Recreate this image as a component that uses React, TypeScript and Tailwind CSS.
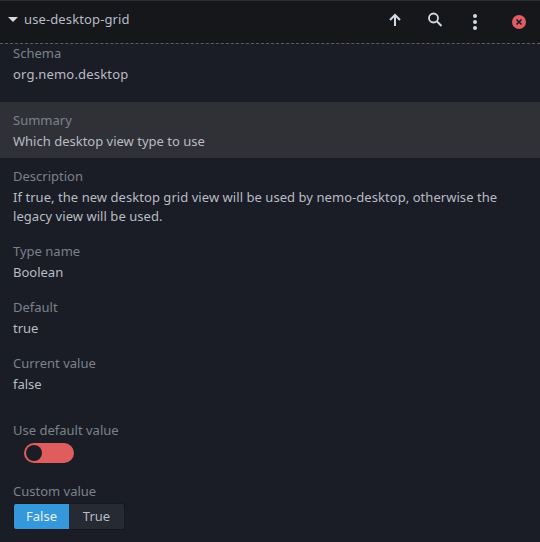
function Field({ label, value, className }: { label: string; value: string; className: string }) {
  return (
    <div className={`px-[13px] ${className}`}>
      <div className="text-[13px] leading-[20px] text-[#7c818c]">{label}</div>
      <div className="text-[13px] leading-[20px] mt-[1px] text-[#b9bcc4]">{value}</div>
    </div>
  )
}

export default function App() {
  return (
    <div className="w-[540px] h-[542px] overflow-hidden flex flex-col bg-[#1a1d25] font-['Noto_Sans',sans-serif]">
      {/* Title bar */}
      <div className="h-[43px] shrink-0 flex items-center bg-[#15171b] border-t border-[#2a2c30] pl-[8px] pb-[4px]">
        <svg width="10" height="6" viewBox="0 0 10 6" className="mr-[6px]">
          <path d="M0 0h10L5 5z" fill="#d3dae3" />
        </svg>
        <span className="text-[13px] tracking-[0.12px] text-[#b9bcc4]">use-desktop-grid</span>
        <div className="ml-auto flex items-center">
          <svg width="16" height="16" viewBox="0 0 16 16" className="mr-[24px]">
            <path d="M8 14V3M3 8l5-5 5 5" fill="none" stroke="#d3dae3" strokeWidth="2" />
          </svg>
          <svg width="16" height="16" viewBox="0 0 16 16" className="mr-[30px]">
            <circle cx="6.5" cy="6" r="4.5" fill="none" stroke="#d3dae3" strokeWidth="1.8" />
            <path d="M10 9.5l4.5 4.5" stroke="#d3dae3" strokeWidth="2" />
          </svg>
          <div className="flex flex-col gap-[2px] mr-[35px] mt-[4px]">
            <span className="w-[4px] h-[4px] rounded-full bg-[#d3dae3]" />
            <span className="w-[4px] h-[4px] rounded-full bg-[#d3dae3]" />
            <span className="w-[4px] h-[4px] rounded-full bg-[#d3dae3]" />
          </div>
          <div className="w-[14px] h-[14px] mt-[4px] rounded-full bg-[#e05d66] flex items-center justify-center mr-[14px]">
            <svg width="8" height="8" viewBox="0 0 8 8">
              <path d="M1.5 1.5l5 5M6.5 1.5l-5 5" stroke="#1a1d25" strokeWidth="1.6" />
            </svg>
          </div>
        </div>
      </div>
      <div className="h-0 border-t border-dashed border-[#5a5d62]" />

      <div className="flex flex-col">
        <div className="h-[59px] px-[13px] mt-[-1px]">
          <div className="text-[13px] leading-[20px] text-[#7c818c]">Schema</div>
          <div className="text-[13px] leading-[20px] mt-[1px] tracking-[0.18px] text-[#b9bcc4]">org.nemo.desktop</div>
        </div>
        <Field label="Summary" value="Which desktop view type to use" className="h-[56px] pt-[8px] bg-[#2f3137]" />
        <div className="px-[13px] h-[80px] pt-[8px]">
          <div className="text-[13px] leading-[20px] text-[#7c818c]">Description</div>
          <div className="text-[13px] leading-[19px] mt-[2px] tracking-[0.05px] text-[#b9bcc4]">
            If true, the new desktop grid view will be used by nemo-desktop, otherwise the legacy view will be used.
          </div>
        </div>
        <Field label="Type name" value="Boolean" className="h-[56px] pt-[3px]" />
        <Field label="Default" value="true" className="h-[56px] pt-[3px]" />
        <Field label="Current value" value="false" className="h-[56px] pt-[3px]" />
      </div>

      <div className="px-[13px] pt-[14px]">
        <div className="text-[13px] leading-[20px] text-[#7c818c]">Use default value</div>
        <div className="mt-[3px] ml-[11px] w-[50px] h-[20px] rounded-full bg-[#e05d5d] flex items-center pl-[2px]">
          <span className="w-[16px] h-[16px] rounded-full bg-[#1a1d25]" />
        </div>
        <div className="mt-[18px] text-[13px] leading-[20px] text-[#7c818c]">Custom value</div>
        <div className="mt-[2px] flex w-[112px] h-[27px] rounded-[3px] overflow-hidden border border-[#16181d] text-[13px]">
          <div className="w-[55px] bg-[#3498db] text-[#e8f2fa] flex items-center justify-center">False</div>
          <div className="flex-1 bg-[#262a33] text-[#b9bcc4] flex items-center justify-center">True</div>
        </div>
      </div>
    </div>
  )
}
